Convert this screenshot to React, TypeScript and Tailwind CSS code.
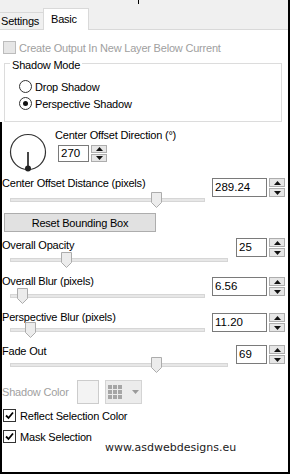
import React from "react";

const txt = "text-[11px] tracking-[-0.2px] leading-[14px]";

function Tri({ up }: { up?: boolean }) {
  return (
    <svg width="7" height="4" viewBox="0 0 7 4">
      <path d={up ? "M0 4L3.5 0L7 4Z" : "M0 0L3.5 4L7 0Z"} fill="#111" />
    </svg>
  );
}

function Spin({ value, inputW, h, lead }: { value: string; inputW: string; h: string; lead: string }) {
  return (
    <div className="flex gap-[2px]">
      <div className={`${inputW} ${h} ${lead} border border-[#7a7a7a] bg-white pl-[2px] text-[11.5px] text-black`}>
        {value}
      </div>
      <div className={`${h} w-[16px] flex flex-col gap-[1px]`}>
        <div className="flex-1 flex items-center justify-center bg-[#e6e6e6] border border-[#adadad]">
          <Tri up />
        </div>
        <div className="flex-1 flex items-center justify-center bg-[#e6e6e6] border border-[#adadad]">
          <Tri />
        </div>
      </div>
    </div>
  );
}

function Slider({ w, thumb, mt }: { w: string; thumb: string; mt: string }) {
  return (
    <div className={`relative ml-[10px] h-[16px] ${w} ${mt} flex items-center`}>
      <div className="h-[4px] w-full bg-[#e7e7e7] border border-[#d6d6d6]" />
      <svg className={`absolute top-0 ${thumb}`} width="11" height="16" viewBox="0 0 11 16">
        <path d="M0.5 0.5H10.5V10.5L5.5 15.5L0.5 10.5Z" fill="#ececec" stroke="#acacac" />
      </svg>
    </div>
  );
}

interface GroupProps {
  label: string;
  mt: string;
  sliderMt: string;
  spinMt: string;
  sliderW: string;
  thumb: string;
  value: string;
  inputW: string;
}

function SliderGroup(p: GroupProps) {
  return (
    <div className={`flex items-start ${p.mt}`}>
      <div className="flex-1 flex flex-col">
        <div className={`pl-[2px] ${txt}`}>{p.label}</div>
        <Slider w={p.sliderW} thumb={p.thumb} mt={p.sliderMt} />
      </div>
      <div className={`${p.spinMt} mr-[3px]`}>
        <Spin value={p.value} inputW={p.inputW} h="h-[19px]" lead="leading-[17px]" />
      </div>
    </div>
  );
}

function CheckBox({ label, mt }: { label: string; mt: string }) {
  return (
    <div className={`flex items-center h-[13px] ${mt}`}>
      <div className="ml-[3px] w-[13px] h-[13px] border border-[#333] bg-white flex items-center justify-center">
        <svg width="9" height="9" viewBox="0 0 9 9">
          <path d="M1 4.5L3.5 7L8 1.5" fill="none" stroke="#000" strokeWidth="1.8" />
        </svg>
      </div>
      <span className={`ml-[4px] ${txt}`}>{label}</span>
    </div>
  );
}

function Radio({ label, checked }: { label: string; checked?: boolean }) {
  return (
    <div className="flex items-center h-[13px]">
      <div className="ml-[14px] w-[13px] h-[13px] rounded-full border border-[#333] bg-white flex items-center justify-center">
        {checked && <div className="w-[5px] h-[5px] rounded-full bg-[#111]" />}
      </div>
      <span className={`ml-[3px] ${txt}`}>{label}</span>
    </div>
  );
}

export default function App() {
  return (
    <div className="relative w-[290px] h-[474px] overflow-hidden bg-white border-r-2 border-black flex flex-col text-black font-['Liberation_Sans',Arial,sans-serif]">
      <div className="absolute left-[138px] top-0 w-[1px] h-[4px] bg-black" />

      {/* tabs */}
      <div className="h-[30px] shrink-0 flex items-end bg-[#f0f0f0] border-b border-[#d9d9d9]">
        <div className={`w-[43px] h-[17px] border-t border-[#d9d9d9] pl-[1px] pt-[1px] ${txt}`}>Settings</div>
        <div className={`relative w-[46px] h-[22px] mb-[-1px] border-x border-t border-[#d9d9d9] bg-white pl-[7px] pt-[3px] ${txt}`}>
          Basic
        </div>
      </div>

      <div className="flex-1 flex flex-col border-b-2 border-black">
        <div className="flex items-center h-[13px] mt-[11px]">
          <div className="ml-[3px] w-[13px] h-[13px] border border-[#bcbcbc] bg-[#e6e6e6]" />
          <span className={`ml-[3px] text-[#a0a0a0] ${txt}`}>Create Output In New Layer Below Current</span>
        </div>

        <div className="relative mt-[9px] ml-[4px] w-[278px] h-[59px] border border-[#dcdcdc] pt-[16px] flex flex-col gap-[4px]">
          <span className={`absolute top-[-6px] left-[5px] bg-white px-[2px] ${txt}`}>Shadow Mode</span>
          <Radio label="Drop Shadow" />
          <Radio label="Perspective Shadow" checked />
        </div>

        <div className="flex-1 flex flex-col shadow-[inset_2px_0_0_#000]">
          <div className="flex mt-[6px] h-[44px]">
            <svg className="ml-[8px] mt-[4px]" width="40" height="40" viewBox="0 0 40 40">
              <circle cx="20" cy="20" r="17.5" fill="none" stroke="#333" strokeWidth="1.2" />
              <line x1="20" y1="20" x2="20" y2="36" stroke="#333" strokeWidth="1.8" />
              <circle cx="20" cy="36.5" r="3" fill="#222" />
            </svg>
            <div className="ml-[7px] flex flex-col">
              <span className={txt}>Center Offset Direction (°)</span>
              <div className="mt-[3px] ml-[3px]">
                <Spin value="270" inputW="w-[31px]" h="h-[17px]" lead="leading-[15px]" />
              </div>
            </div>
          </div>

          <SliderGroup label="Center Offset Distance (pixels)" mt="mt-[4px]" sliderMt="mt-[2px]" spinMt="mt-[2px]" sliderW="w-[195px]" thumb="left-[141px]" value="289.24" inputW="w-[55px]" />

          <div className={`mt-[5px] ml-[4px] w-[152px] h-[19px] bg-[#e1e1e1] border border-[#adadad] flex items-center justify-center ${txt}`}>
            Reset Bounding Box
          </div>

          <SliderGroup label="Overall Opacity" mt="mt-[6px]" sliderMt="mt-0" spinMt="mt-0" sliderW="w-[218px]" thumb="left-[51px]" value="25" inputW="w-[31px]" />
          <SliderGroup label="Overall Blur (pixels)" mt="mt-[6px]" sliderMt="mt-0" spinMt="mt-[3px]" sliderW="w-[195px]" thumb="left-[7px]" value="6.56" inputW="w-[55px]" />
          <SliderGroup label="Perspective Blur (pixels)" mt="mt-[6px]" sliderMt="-mt-[2px]" spinMt="mt-[3px]" sliderW="w-[195px]" thumb="left-[15px]" value="11.20" inputW="w-[55px]" />
          <SliderGroup label="Fade Out" mt="mt-[6px]" sliderMt="-mt-[1px]" spinMt="mt-[1px]" sliderW="w-[218px]" thumb="left-[141px]" value="69" inputW="w-[31px]" />

          <div className="flex items-center h-[24px] mt-[7px]">
            <span className={`pl-[2px] w-[77px] text-[#a0a0a0] ${txt}`}>Shadow Color</span>
            <div className="w-[22px] h-[24px] border border-[#cccccc] bg-[#f3f3f3]" />
            <div className="ml-[6px] w-[37px] h-[24px] border border-[#d4d4d4] bg-[#ececec] flex items-center">
              <div className="ml-[2px] grid grid-cols-3 gap-[1px]">
                {Array.from({ length: 9 }).map((_, i) => (
                  <div key={i} className="w-[4px] h-[4px] bg-[#a6a6a6]" />
                ))}
              </div>
              <svg className="ml-[10px]" width="7" height="4" viewBox="0 0 7 4">
                <path d="M0 0L3.5 4L7 0Z" fill="#9a9a9a" />
              </svg>
            </div>
          </div>

          <CheckBox label="Reflect Selection Color" mt="mt-[5px]" />
          <CheckBox label="Mask Selection" mt="mt-[8px]" />

          <div className="-mt-[2px] ml-[105px] text-[11px] leading-[14px] text-[#1a1a1a] font-['DejaVu_Sans',Verdana,sans-serif]">
            www.asdwebdesigns.eu
          </div>
        </div>
      </div>
    </div>
  );
}
